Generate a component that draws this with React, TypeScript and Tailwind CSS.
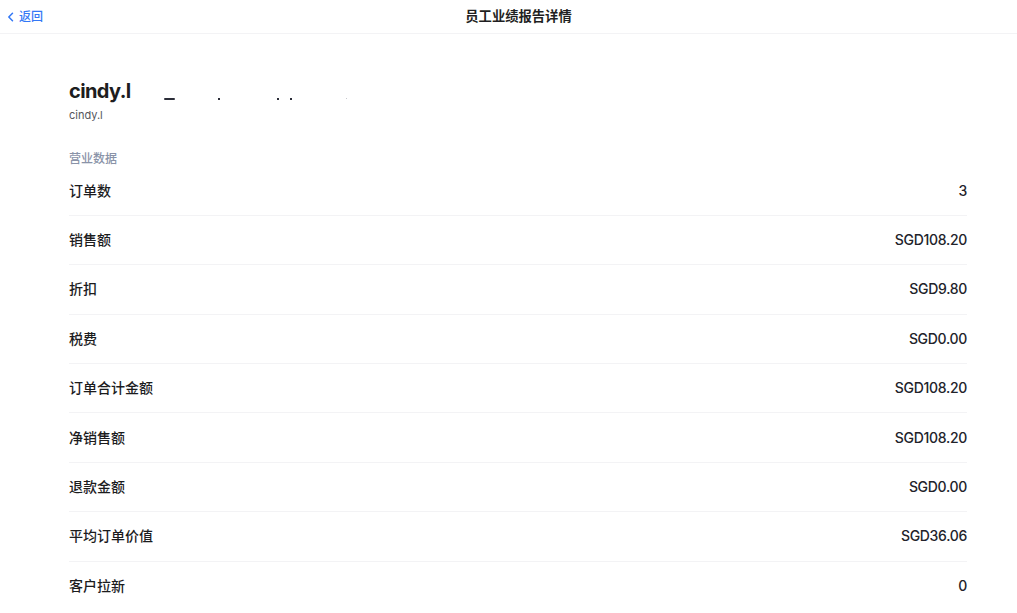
import React from "react"

interface MetricRow {
  label: string
  value: string
}

const rows: MetricRow[] = [
  { label: "订单数", value: "3" },
  { label: "销售额", value: "SGD108.20" },
  { label: "折扣", value: "SGD9.80" },
  { label: "税费", value: "SGD0.00" },
  { label: "订单合计金额", value: "SGD108.20" },
  { label: "净销售额", value: "SGD108.20" },
  { label: "退款金额", value: "SGD0.00" },
  { label: "平均订单价值", value: "SGD36.06" },
  { label: "客户拉新", value: "0" },
]

function ChevronLeft() {
  return (
    <svg width="7" height="10" viewBox="0 0 7 10" fill="none">
      <path d="M5.5 1.2 L1.8 5 L5.5 8.8" stroke="#3478f6" strokeWidth="1.5" strokeLinecap="round" strokeLinejoin="round" />
    </svg>
  )
}

export default function App() {
  return (
    <div
      className="min-h-screen bg-white text-[#1c1c1e]"
      style={{ fontFamily: 'Inter, "Noto Sans CJK SC", sans-serif' }}
    >
      {/* top bar */}
      <div className="grid h-[34px] grid-cols-[1fr_auto_1fr] items-center border-b border-[#f3f3f5]">
        <button className="flex items-center gap-[5px] justify-self-start pl-[7px] text-[12px] font-medium text-[#3478f6]">
          <ChevronLeft />
          <span>返回</span>
        </button>
        <h1 className="pl-[20px] text-[13.3px] font-semibold text-[#1f1f22]">员工业绩报告详情</h1>
        <div />
      </div>

      <div className="pl-[69px] pr-[50px]">
        <div className="flex items-start pt-[43px]">
          <div className="text-[20px] font-bold leading-[28px] tracking-[-0.6px] text-[#1d1d20]">cindy.l</div>
          {/* clipped remnants of the hidden title */}
          <div className="mt-[21px] flex items-start">
            <span className="ml-[33px] h-[2px] w-[11px] rounded-sm bg-[#2b2d38]" />
            <span className="ml-[43px] h-[2px] w-[2px] bg-[#2b2d38]" />
            <span className="ml-[57px] h-[2px] w-[2px] bg-[#2b2d38]" />
            <span className="ml-[11px] h-[2px] w-[2px] bg-[#2b2d38]" />
            <span className="ml-[54px] h-[1px] w-[1px] bg-[#c8c9ce]" />
          </div>
        </div>
        <div className="mt-[3px] text-[11px] leading-[14px] text-[#55565c]">cindy.l</div>

        <div className="mt-[28.5px] text-[12px] font-medium leading-[16px] text-[#8a93a8]">营业数据</div>

        <div>
          {rows.map((r, i) => (
            <div
              key={r.label}
              className={
                "flex items-center justify-between py-[14.2px] text-[14px] font-medium leading-5 " +
                (i < rows.length - 1 ? "border-b border-[#f3f3f5]" : "")
              }
            >
              <span className="text-[#1c1c1e]">{r.label}</span>
              <span className="tracking-[-0.3px] text-[#22232a]">{r.value}</span>
            </div>
          ))}
        </div>
      </div>
    </div>
  )
}
